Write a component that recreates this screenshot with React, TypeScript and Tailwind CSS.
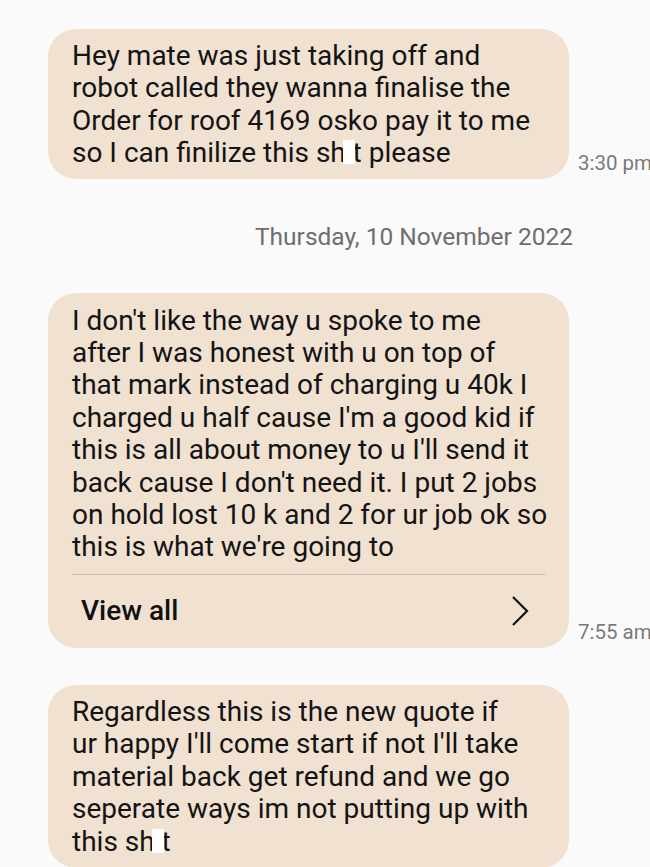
function Censored() {
  return (
    <span className="relative inline-block">
      <span>i</span>
      <span className="absolute left-[-3px] top-[3px] h-[24px] w-[12px] bg-white" />
    </span>
  );
}

function Lines({ lines }: { lines: React.ReactNode[] }) {
  return (
    <>
      {lines.map((l, i) => (
        <span key={i} className="block whitespace-nowrap">
          {l}
        </span>
      ))}
    </>
  );
}

function Bubble({ children, time }: { children: React.ReactNode; time?: string }) {
  return (
    <div className="flex items-end">
      <div className="w-[521px] shrink-0 rounded-[28px] bg-[#f0e1d1] px-6 text-[28px] leading-[32.4px] text-[#141414]">
        {children}
      </div>
      {time && (
        <span className="mb-0 ml-[9px] shrink-0 whitespace-nowrap text-[20.5px] text-[#7a7a7a]">{time}</span>
      )}
    </div>
  );
}

export default function App() {
  return (
    <div
      className="h-[867px] w-[650px] overflow-hidden bg-[#fafafa] pl-[48px] pt-[29px]"
      style={{ fontFamily: 'Roboto, "Noto Sans", sans-serif' }}
    >
      <Bubble time="3:30 pm">
        <p className="pb-[9px] pt-[11px]">
          <Lines
            lines={[
              'Hey mate was just taking off and',
              'robot called they wanna finalise the',
              'Order for roof 4169 osko pay it to me',
              <>
                so I can finilize this sh<Censored />t please
              </>,
            ]}
          />
        </p>
      </Bubble>

      <div className="mb-[42px] mt-[44px] w-[525px] text-right text-[24.5px] leading-[28px] text-[#6e6e6e]">
        Thursday, 10 November 2022
      </div>

      <Bubble time="7:55 am">
        <p className="pb-[10px] pt-[12px]">
          <Lines
            lines={[
              "I don't like the way u spoke to me",
              'after I was honest with u on top of',
              'that mark instead of charging u 40k I',
              "charged u half cause I'm a good kid if",
              "this is all about money to u I'll send it",
              "back cause I don't need it. I put 2 jobs",
              'on hold lost 10 k and 2 for ur job ok so',
              "this is what we're going to",
            ]}
          />
        </p>
        <div className="border-t border-[#c9bcae]" />
        <div className="flex h-[73px] items-center justify-between pl-[9px] pr-[15px]">
          <span className="text-[28px] font-medium text-[#111]">View all</span>
          <svg width="20" height="32" viewBox="0 0 20 32" fill="none" stroke="#111" strokeWidth="2.2">
            <path d="M3 2 L17 16 L3 30" />
          </svg>
        </div>
      </Bubble>

      <div className="mt-[37px]">
        <Bubble>
          <p className="pb-[10px] pt-[11px]">
            <Lines
              lines={[
                'Regardless this is the new quote if',
                "ur happy I'll come start if not I'll take",
                'material back get refund and we go',
                'seperate ways im not putting up with',
                <>
                  this sh<Censored />t
                </>,
              ]}
            />
          </p>
        </Bubble>
      </div>
    </div>
  );
}
